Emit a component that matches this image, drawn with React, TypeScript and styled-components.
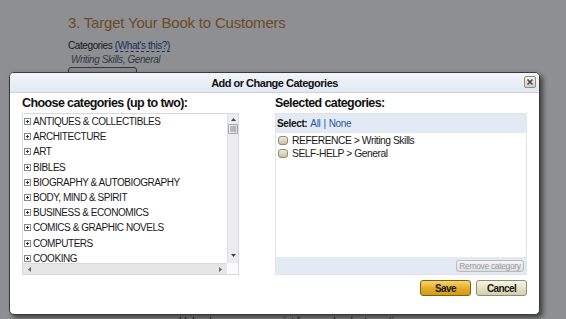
import React from "react";
import styled, { createGlobalStyle } from "styled-components";

const FONT = `"Liberation Sans", Arial, Helvetica, sans-serif`;

const Global = createGlobalStyle`
  html, body { margin: 0; padding: 0; background: #fff; }
  body { font-family: ${FONT}; }
  * { box-sizing: border-box; }
`;

const Page = styled.div`
  position: relative;
  width: 566px;
  height: 319px;
  overflow: hidden;
  background: #fff;
`;

const Content = styled.div`
  padding: 13px 0 0 68px;
`;

const Heading = styled.h2`
  margin: 0;
  font-size: 15px;
  letter-spacing: -0.2px;
  font-weight: normal;
  line-height: 19px;
  color: #c57a2c;
`;

const FieldLabel = styled.div`
  margin-top: 7px;
  font-size: 10px;
  letter-spacing: -0.4px;
  line-height: 14px;
  color: #222;
`;

const HelpLink = styled.span`
  color: #284a8a;
  border-bottom: 1px dashed #284a8a;
`;

const CurrentValue = styled.div`
  padding-left: 3px;
  font-size: 10px;
  letter-spacing: -0.4px;
  line-height: 14px;
  font-style: italic;
  color: #555b6b;
`;

const PageButton = styled.div`
  width: 69px;
  height: 18px;
  border: 1px solid #555;
  border-radius: 3px;
  background: #f2f2f2;
  padding-top: 5px;
  font-size: 10px;
  text-align: center;
  color: #222;
`;

const HiddenText = styled.div`
  margin: 230px 0 0 111px;
  font-size: 11px;
  letter-spacing: -0.4px;
  color: #222;
`;

const Overlay = styled.div`
  position: absolute;
  inset: 0;
  background: rgba(16, 20, 28, 0.48);
`;

const Dialog = styled.div`
  position: absolute;
  left: 9px;
  top: 72px;
  width: 531px;
  height: 243px;
  border: 1px solid #3a3a3a;
  border-radius: 5px;
  background: #fff;
  box-shadow: 3px 3px 5px rgba(0, 0, 0, 0.55);
  display: flex;
  flex-direction: column;
  overflow: hidden;
`;

const TitleBar = styled.div`
  position: relative;
  height: 20px;
  flex: none;
  background: linear-gradient(#f2f5fa, #e2e9f2);
  border-bottom: 1px solid #c9d2de;
  display: flex;
  align-items: center;
  justify-content: center;
  font-size: 11px;
  letter-spacing: -0.5px;
  font-weight: bold;
  color: #111;
`;

const CloseButton = styled.div`
  position: absolute;
  right: 3px;
  top: 3px;
  width: 12px;
  height: 12px;
  border: 1px solid #8d907c;
  border-radius: 2px;
  background: linear-gradient(#f4f3e6, #d3d1bb);
  display: flex;
  align-items: center;
  justify-content: center;
`;

const Body = styled.div`
  display: grid;
  grid-template-columns: 217px 252px;
  column-gap: 36px;
  padding: 3px 0 0 12px;
`;

const Column = styled.div`
  display: flex;
  flex-direction: column;
`;

const ColumnTitle = styled.div`
  height: 17px;
  font-size: 12.5px;
  letter-spacing: -0.6px;
  font-weight: bold;
  line-height: 15px;
  color: #111;
`;

const ListBox = styled.div`
  height: 162px;
  border: 1px solid #d4dbe3;
  display: grid;
  grid-template-columns: 1fr 11px;
  grid-template-rows: 1fr 11px;
`;

const ListItems = styled.div`
  overflow: hidden;
  padding-left: 1px;
`;

const TreeRow = styled.div`
  height: 15.2px;
  display: flex;
  align-items: center;
  gap: 2px;
  font-size: 10px;
  letter-spacing: -0.45px;
  color: #1a1a1a;
  white-space: nowrap;
`;

const VScroll = styled.div`
  background: #ececec;
  border-left: 1px solid #e0e0e0;
  display: flex;
  flex-direction: column;
  align-items: center;
  padding-top: 4px;
`;

const Thumb = styled.div`
  margin-top: 3px;
  width: 10px;
  height: 10px;
  border: 1px solid #a9a9a9;
  border-radius: 1px;
  background: linear-gradient(90deg, #f4f4f4, #dadada);
  display: flex;
  align-items: center;
  justify-content: center;
`;

const ScrollSpacer = styled.div`
  flex: 1;
`;

const HScroll = styled.div`
  background: #e6e6e6;
  border-top: 1px solid #dadada;
  display: flex;
  align-items: center;
  justify-content: space-between;
  padding: 0 5px;
`;

const Corner = styled.div`
  background: #fbfbfb;
`;

const SelectedPanel = styled.div`
  height: 162px;
  border: 1px solid #dde4ee;
  display: flex;
  flex-direction: column;
`;

const SelectBar = styled.div`
  height: 19px;
  background: #e3eaf4;
  display: flex;
  align-items: center;
  padding-left: 1px;
  font-size: 10px;
  letter-spacing: -0.35px;
  color: #111;
`;

const SelectLabel = styled.b`
  margin-right: 3px;
`;

const BlueLink = styled.span`
  color: #2a55a4;
`;

const Sep = styled.span`
  color: #2a55a4;
  margin: 0 3px;
`;

const SelectedList = styled.div`
  flex: 1;
  padding: 1px 0 0 2px;
`;

const CheckRow = styled.label`
  height: 13.3px;
  display: flex;
  align-items: center;
  gap: 4px;
  font-size: 10.3px;
  letter-spacing: -0.45px;
  color: #1a1a1a;
`;

const Check = styled.span`
  width: 10px;
  height: 9px;
  border: 1px solid #8c8a78;
  border-radius: 3px;
  background: linear-gradient(#f0ecda, #c9c29e);
`;

const PanelFooter = styled.div`
  height: 17px;
  background: #e3eaf4;
  display: flex;
  align-items: center;
  justify-content: flex-end;
  padding-right: 2px;
`;

const RemoveButton = styled.div`
  height: 12px;
  width: 68px;
  text-align: center;
  border: 1px solid #b5bac0;
  border-radius: 3px;
  background: linear-gradient(#f6f6f6, #dedede);
  font-size: 8.5px;
  letter-spacing: -0.35px;
  line-height: 10px;
  color: #9a9a9a;
`;

const Actions = styled.div`
  display: flex;
  justify-content: flex-end;
  gap: 5px;
  padding: 5px 12px 0 0;
`;

const ActionButton = styled.div<{ $primary?: boolean }>`
  width: 51px;
  height: 16px;
  border-radius: 3px;
  border: 1px solid ${(p) => (p.$primary ? "#7d5e14" : "#8e8c74")};
  background: ${(p) =>
    p.$primary
      ? "linear-gradient(#f8d56a, #e3aa28 55%, #d49b18)"
      : "linear-gradient(#f7f6e6, #e2dfc4 55%, #d3cfae)"};
  display: flex;
  align-items: center;
  justify-content: center;
  font-size: 10px;
  letter-spacing: -0.6px;
  font-weight: bold;
  color: #1a1a1a;
`;

const Plus = () => (
  <svg width="7" height="7" viewBox="0 0 7 7">
    <rect x="0.5" y="0.5" width="6" height="6" fill="#fff" stroke="#8a8a8a" />
    <path d="M2 3.5h3M3.5 2v3" stroke="#333" strokeWidth="1" />
  </svg>
);

const categories = [
  "ANTIQUES & COLLECTIBLES",
  "ARCHITECTURE",
  "ART",
  "BIBLES",
  "BIOGRAPHY & AUTOBIOGRAPHY",
  "BODY, MIND & SPIRIT",
  "BUSINESS & ECONOMICS",
  "COMICS & GRAPHIC NOVELS",
  "COMPUTERS",
  "COOKING",
];

const selected = ["REFERENCE > Writing Skills", "SELF-HELP > General"];

export default function App() {
  return (
    <Page>
      <Global />
      <Content>
        <Heading>3. Target Your Book to Customers</Heading>
        <FieldLabel>
          Categories <HelpLink>(What's this?)</HelpLink>
        </FieldLabel>
        <CurrentValue>Writing Skills, General</CurrentValue>
        <PageButton>Add/change</PageButton>
        <HiddenText>Upload a new manuscript for your book at any time</HiddenText>
      </Content>
      <Overlay />
      <Dialog>
        <TitleBar>
          Add or Change Categories
          <CloseButton>
            <svg width="8" height="8" viewBox="0 0 8 8">
              <path d="M1.5 1.5l5 5M6.5 1.5l-5 5" stroke="#4b4266" strokeWidth="1.6" />
            </svg>
          </CloseButton>
        </TitleBar>
        <Body>
          <Column>
            <ColumnTitle>Choose categories (up to two):</ColumnTitle>
            <ListBox>
              <ListItems>
                {categories.map((c) => (
                  <TreeRow key={c}>
                    <Plus />
                    {c}
                  </TreeRow>
                ))}
              </ListItems>
              <VScroll>
                <svg width="5" height="3" viewBox="0 0 5 3">
                  <path d="M0 3L2.5 0L5 3z" fill="#444" />
                </svg>
                <Thumb>
                  <svg width="6" height="6" viewBox="0 0 6 6">
                    <path d="M0 1h6M0 3h6M0 5h6" stroke="#8a8a8a" strokeWidth="1" />
                  </svg>
                </Thumb>
                <ScrollSpacer />
                <svg width="5" height="3" viewBox="0 0 5 3" style={{ marginBottom: 6 }}>
                  <path d="M0 0L2.5 3L5 0z" fill="#444" />
                </svg>
              </VScroll>
              <HScroll>
                <svg width="3" height="5" viewBox="0 0 3 5">
                  <path d="M3 0L0 2.5L3 5z" fill="#666" />
                </svg>
                <svg width="3" height="5" viewBox="0 0 3 5">
                  <path d="M0 0L3 2.5L0 5z" fill="#666" />
                </svg>
              </HScroll>
              <Corner />
            </ListBox>
          </Column>
          <Column>
            <ColumnTitle>Selected categories:</ColumnTitle>
            <SelectedPanel>
              <SelectBar>
                <SelectLabel>Select:</SelectLabel>
                <BlueLink>All</BlueLink>
                <Sep>|</Sep>
                <BlueLink>None</BlueLink>
              </SelectBar>
              <SelectedList>
                {selected.map((s) => (
                  <CheckRow key={s}>
                    <Check />
                    {s}
                  </CheckRow>
                ))}
              </SelectedList>
              <PanelFooter>
                <RemoveButton>Remove category</RemoveButton>
              </PanelFooter>
            </SelectedPanel>
          </Column>
        </Body>
        <Actions>
          <ActionButton $primary>Save</ActionButton>
          <ActionButton>Cancel</ActionButton>
        </Actions>
      </Dialog>
    </Page>
  );
}
